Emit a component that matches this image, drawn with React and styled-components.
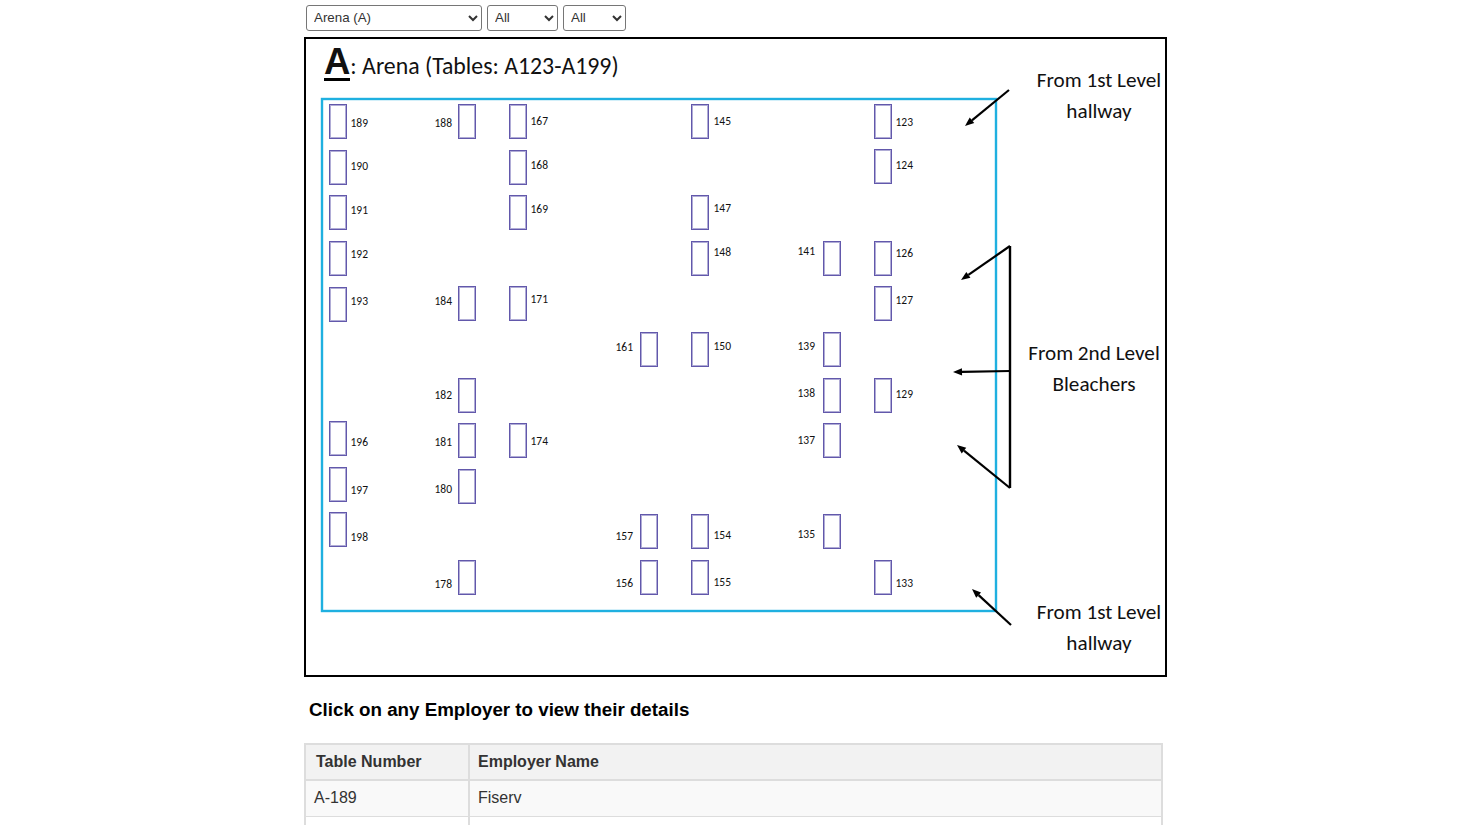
import styled, { createGlobalStyle } from 'styled-components'

const GlobalStyle = createGlobalStyle`
html, body {
  margin: 0;
  padding: 0;
  height: 825px;
  overflow: hidden;
  background: #fff;
  font-family: "Liberation Sans", Arial, sans-serif;
}
`

const Page = styled.div`
width: 863px;
margin-left: 304px;
display: flex;
flex-direction: column;
`

const Filters = styled.form`
display: flex;
gap: 5px;
height: 26px;
margin: 5px 0 6px 2px;
`

const Select = styled.select`
width: ${p => p.$width}px;
height: 26px;
padding: 0 0 1px 3px;
font-family: "Liberation Sans", Arial, sans-serif;
font-size: 13.33px;
color: #333;
background: #fff;
border: 1px solid #767676;
border-radius: 3px;
`

const MapBox = styled.div`
position: relative;
box-sizing: border-box;
width: 863px;
height: 640px;
border: 2px solid #000;
font-family: Carlito, Lato, sans-serif;
color: #111;
`

const MapTitle = styled.div`
position: absolute;
left: 18px;
top: 2px;
display: flex;
align-items: baseline;
font-size: 23.8px;
line-height: 50px;
white-space: nowrap;
`

const BigLetter = styled.span`
display: inline-block;
font-family: "Liberation Sans", Arial, sans-serif;
font-size: 36.5px;
font-weight: 700;
line-height: 33px;
border-bottom: 3px solid #000;
`

const MapDrawing = styled.svg`
position: absolute;
left: 0;
top: 0;
`

const Seat = styled.div`
position: absolute;
box-sizing: border-box;
left: ${p => p.$x - 306}px;
top: ${p => p.$y - 39}px;
width: 18px;
height: 35px;
border: 1px solid #6258ab;
box-shadow: inset 0 0 0 1px rgba(112, 104, 180, 0.55);
`

const SeatLabel = styled.span`
position: absolute;
left: ${p => p.$x - 306 - 0.5}px;
top: ${p => p.$y - 39 - 7}px;
font-size: 11.5px;
line-height: 14px;
`

const Note = styled.div`
position: absolute;
left: ${p => p.$x - 306 - 90}px;
top: ${p => p.$y - 39}px;
width: 180px;
text-align: center;
font-size: 21.2px;
line-height: 31px;
`

const Hint = styled.h3`
margin: 21px 0 22px 5px;
font-size: 18.75px;
line-height: 23px;
font-weight: 700;
color: #000;
font-family: "Liberation Sans", Arial, sans-serif;
`

const EmployerTable = styled.table`
width: 859px;
border-collapse: collapse;
table-layout: fixed;
font-size: 16px;
`

const HeadCell = styled.th`
height: 34px;
padding: 0 ${p => p.$pad}px;
text-align: left;
font-weight: 700;
color: #333;
background: #f2f2f2;
border: 2px solid #ddd;
width: ${p => p.$width || 'auto'};
`

const Cell = styled.td`
height: 34px;
padding: 0 8px 1px;
color: #333;
background: ${p => (p.$odd ? '#f9f9f9' : '#fff')};
border: 1px solid #ddd;
border-left-width: 2px;
border-right-width: 2px;
`

// [x of rect, y of rect, table no, label x, label center y]
const seats = [
  [329, 104, 189, 351, 123], [329, 150, 190, 351, 166], [329, 195, 191, 351, 210],
  [329, 241, 192, 351, 254], [329, 287, 193, 351, 301], [329, 421, 196, 351, 442],
  [329, 467, 197, 351, 490], [329, 512, 198, 351, 537],
  [458, 104, 188, 435, 123], [458, 286, 184, 435, 301], [458, 378, 182, 435, 395],
  [458, 423, 181, 435, 442], [458, 469, 180, 435, 489], [458, 560, 178, 435, 584],
  [509, 104, 167, 531, 121], [509, 150, 168, 531, 165], [509, 195, 169, 531, 209],
  [509, 286, 171, 531, 299], [509, 423, 174, 531, 441],
  [640, 332, 161, 616, 347], [640, 514, 157, 616, 536], [640, 560, 156, 616, 583],
  [691, 104, 145, 714, 121], [691, 195, 147, 714, 208], [691, 241, 148, 714, 252],
  [691, 332, 150, 714, 346], [691, 514, 154, 714, 535], [691, 560, 155, 714, 582],
  [823, 241, 141, 798, 251], [823, 332, 139, 798, 346], [823, 378, 138, 798, 393],
  [823, 423, 137, 798, 440], [823, 514, 135, 798, 534],
  [874, 104, 123, 896, 122], [874, 149, 124, 896, 165], [874, 241, 126, 896, 253],
  [874, 286, 127, 896, 300], [874, 378, 129, 896, 394], [874, 560, 133, 896, 583],
]

const notes = [
  [1099, 65, 'From 1st Level', 'hallway'],
  [1094, 338, 'From 2nd Level', 'Bleachers'],
  [1099, 597, 'From 1st Level', 'hallway'],
]

const Arrow = ({ x1, y1, x2, y2 }) => {
  // arrow head is drawn back from the tip along the line
  const a = Math.atan2(y2 - y1, x2 - x1)
  const len = 9
  const wide = 3.6
  const bx = x2 - Math.cos(a) * len
  const by = y2 - Math.sin(a) * len
  const px = -Math.sin(a) * wide
  const py = Math.cos(a) * wide
  return (
    <g>
      <line x1={x1} y1={y1} x2={bx} y2={by} stroke="#000" strokeWidth="2.2" />
      <polygon points={`${x2},${y2} ${bx + px},${by + py} ${bx - px},${by - py}`} fill="#000" />
    </g>
  )
}

const App = () => {
  return (
    <Page>
      <GlobalStyle />
      <Filters>
        <Select $width={176} defaultValue="A">
          <option value="A">Arena (A)</option>
        </Select>
        <Select $width={71}>
          <option>All</option>
        </Select>
        <Select $width={63}>
          <option>All</option>
        </Select>
      </Filters>

      <MapBox>
        <MapDrawing width="859" height="636" viewBox="306 39 859 636">
          <rect x="322" y="99" width="674" height="512" fill="none" stroke="#1fb0e0" strokeWidth="2.4" />
          <polyline points="1010,371 1010,246 1010,488" fill="none" stroke="#000" strokeWidth="2.4" />
          <Arrow x1={1009} y1={90} x2={965} y2={126} />
          <Arrow x1={1010} y1={246} x2={961} y2={280} />
          <Arrow x1={1010} y1={371} x2={953} y2={372} />
          <Arrow x1={1010} y1={488} x2={957} y2={445} />
          <Arrow x1={1011} y1={625} x2={972} y2={589} />
        </MapDrawing>
        <MapTitle>
          <BigLetter>A</BigLetter>
          <span>: Arena (Tables: A123-A199)</span>
        </MapTitle>
        {seats.map(([x, y, no, lx, ly]) => (
          <div key={no}>
            <Seat $x={x} $y={y} />
            <SeatLabel $x={lx} $y={ly}>{no}</SeatLabel>
          </div>
        ))}
        {notes.map(([x, y, a, b]) => (
          <Note key={y} $x={x} $y={y}>{a}<br />{b}</Note>
        ))}
      </MapBox>

      <Hint>Click on any Employer to view their details</Hint>

      <EmployerTable>
        <thead>
          <tr>
            <HeadCell $width="142px" $pad={10}>Table Number</HeadCell>
            <HeadCell $pad={8}>Employer Name</HeadCell>
          </tr>
        </thead>
        <tbody>
          <tr>
            <Cell $odd>A-189</Cell>
            <Cell $odd>Fiserv</Cell>
          </tr>
          <tr>
            <Cell>&nbsp;</Cell>
            <Cell>&nbsp;</Cell>
          </tr>
        </tbody>
      </EmployerTable>
    </Page>
  )
}

export default App
